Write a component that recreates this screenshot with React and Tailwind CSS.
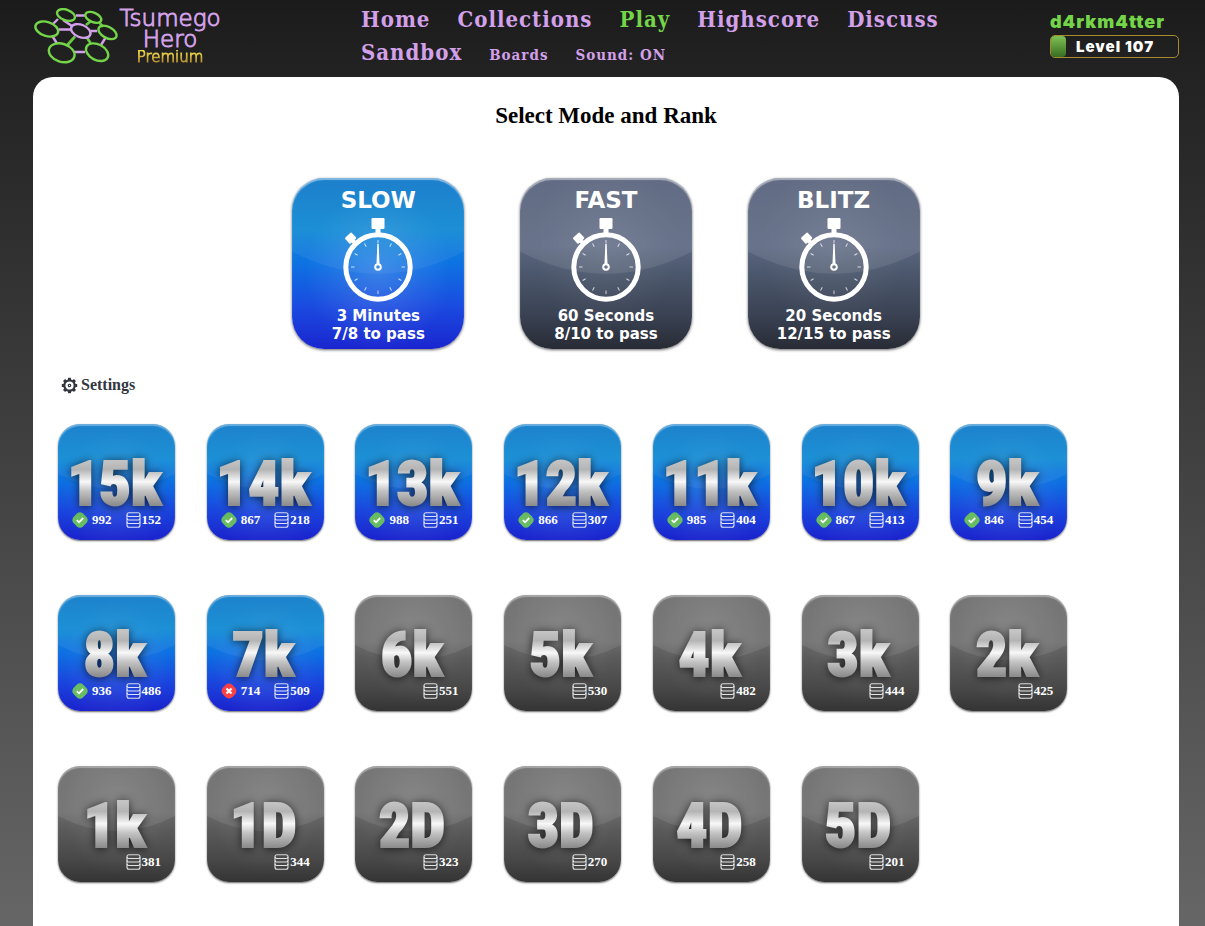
import React from "react";

const nav = [
  ["Home", false], ["Collections", false], ["Play", true], ["Highscore", false], ["Discuss", false], ["Sandbox", false],
];

const modes = [
  { name: "SLOW", time: "3 Minutes", pass: "7/8 to pass", active: true },
  { name: "FAST", time: "60 Seconds", pass: "8/10 to pass" },
  { name: "BLITZ", time: "20 Seconds", pass: "12/15 to pass" },
];

const ranks = [
  ["15k", 152, 992, "ok"], ["14k", 218, 867, "ok"], ["13k", 251, 988, "ok"], ["12k", 307, 866, "ok"],
  ["11k", 404, 985, "ok"], ["10k", 413, 867, "ok"], ["9k", 454, 846, "ok"], ["8k", 486, 936, "ok"],
  ["7k", 509, 714, "fail"], ["6k", 551], ["5k", 530], ["4k", 482], ["3k", 444], ["2k", 425],
  ["1k", 381], ["1D", 344], ["2D", 323], ["3D", 270], ["4D", 258], ["5D", 201],
];

function Logo() {
  return (
    <svg width="86" height="56" viewBox="33 8 86 56" fill="none" aria-hidden="true">
      <g stroke="#d3a0ea" strokeWidth="2.4">
        <path d="M53 24l5-5M76 15.500h9M59 29.500h12M91 31h6M52 35.500l5 8M74 52h11M101 45l5-8M63 20l9 6" />
      </g>
      <g stroke="#68c843" strokeWidth="2.8">
        <path d="M75 36.500l-8 9M86 25l5-4M86.500 37l4 6M99 22l4 5" />
      </g>
      <g stroke="#74d549" strokeWidth="2.400">
        <ellipse cx="46.800" cy="29" rx="11.800" ry="7" transform="rotate(18 46.800 29)" />
        <ellipse cx="66" cy="15" rx="9.300" ry="5.300" transform="rotate(20 66 15)" />
        <ellipse cx="93.300" cy="17.400" rx="8.500" ry="4.700" transform="rotate(24 93.300 17.400)" />
        <ellipse cx="107.500" cy="32.400" rx="9.800" ry="5.600" transform="rotate(28 107.500 32.400)" />
        <ellipse cx="61.700" cy="52.800" rx="13.200" ry="9" transform="rotate(18 61.700 52.800)" />
        <ellipse cx="97.100" cy="52.200" rx="11.900" ry="7.800" transform="rotate(28 97.100 52.200)" />
      </g>
      <ellipse cx="80.800" cy="31" rx="10.200" ry="6.200" transform="rotate(22 80.800 31)" stroke="#d3a0ea" strokeWidth="2.400" />
    </svg>
  );
}

function Stopwatch() {
  const ticks = [0, 30, 60, 90, 120, 150, 180, 210, 240, 270, 300, 330];
  return (
    <svg width="70" height="84" viewBox="0 0 70 84" className="block" aria-hidden="true">
      <rect x="28.500" y="0" width="13" height="11" rx="1.200" fill="#fff" />
      <rect x="32.500" y="10" width="5" height="6" fill="#fff" />
      <rect x="-4.500" y="-3.800" width="9" height="8" rx="1" fill="#fff" transform="translate(7.500 20) rotate(-42)" />
      <path d="M9 22l5 5" stroke="#fff" strokeWidth="4" />
      <circle cx="35" cy="49" r="32.200" fill="none" stroke="#fff" strokeWidth="5" />
      {ticks.map((t) => (
        <path key={t} d="M35 22v3.500" stroke="#fff" strokeOpacity=".75" strokeWidth="1" transform={`rotate(${t} 35 49)`} />
      ))}
      <path d="M34.300 26h1.400l.8 20h-3z" fill="#fff" />
      <circle cx="35" cy="49" r="2.800" fill="none" stroke="#fff" strokeWidth="2" />
    </svg>
  );
}

function Gloss({ strength }) {
  return (
    <svg viewBox="0 0 100 100" preserveAspectRatio="none" className="absolute inset-0 h-full w-full" aria-hidden="true">
      <path d="M0 0H100V43Q50 69 0 43Z" fill="#fff" fillOpacity={strength} />
    </svg>
  );
}

function StackIcon() {
  return (
    <svg width="15" height="16" viewBox="0 0 15 16" fill="none" stroke="#fff" strokeWidth="1.100" strokeOpacity=".85" aria-hidden="true">
      <rect x="1" y=".8" width="13" height="14.400" rx="2" />
      <path d="M1 3.200q.3 1.300 1.800 1.300h9.400q1.500 0 1.800-1.300M1 6.700q.3 1.300 1.800 1.300h9.400q1.500 0 1.800-1.300M1 10.200q.3 1.300 1.800 1.300h9.400q1.500 0 1.800-1.300" />
    </svg>
  );
}

function ResultIcon({ kind }) {
  return kind === "ok" ? (
    <svg width="16" height="16" viewBox="0 0 16 16" role="img" aria-label="Passed">
      <rect x="1.300" y="1.300" width="13.400" height="13.400" rx="4.300" fill="#68bd62" transform="rotate(45 8 8)" />
      <path d="M4.800 8.200l2.200 2.100L11.200 6" fill="none" stroke="#fff" strokeWidth="1.800" />
    </svg>
  ) : (
    <svg width="16" height="16" viewBox="0 0 16 16" role="img" aria-label="Failed">
      <rect x="1.300" y="1.300" width="13.400" height="13.400" rx="5" fill="#fb4143" transform="rotate(45 8 8)" />
      <path d="M5.500 5.500l5 5M10.500 5.500l-5 5" fill="none" stroke="#fff" strokeWidth="2.200" />
    </svg>
  );
}

function ModeCard({ mode }) {
  return (
    <button
      type="button"
      aria-pressed={!!mode.active}
      className={
        "relative h-[171px] w-[172px] overflow-hidden rounded-[32px] text-center font-['DejaVu_Sans',sans-serif] font-bold text-white shadow-[0_1px_3px_rgba(0,0,0,0.6),inset_0_2px_1px_rgba(255,255,255,0.45)] " +
        (mode.active
          ? "bg-[radial-gradient(ellipse_at_50%_55%,rgba(255,255,255,0.16),transparent_60%),linear-gradient(#0f78c8,#0e88d4_30%,#0d72e2_50%,#1a4be0_75%,#1a25cf)]"
          : "bg-[radial-gradient(ellipse_at_50%_40%,rgba(255,255,255,0.08),transparent_60%),linear-gradient(#525d77,#5a6680_40%,#4c586d_55%,#3a4253_80%,#282b35)]")
      }
    >
      <Gloss strength={mode.active ? 0.06 : 0.09} />
      <span className="relative flex h-full flex-col items-center pt-2">
        <span className="text-[23px] leading-7">{mode.name}</span>
        <span className="mt-1"><Stopwatch /></span>
        <span className="mt-[5px] text-[15px] leading-[18px]">{mode.time}<br />{mode.pass}</span>
      </span>
    </button>
  );
}

function RankTile({ rank: [name, count, score, result] }) {
  return (
    <button
      type="button"
      className={
        "relative block h-[116px] w-[117px] overflow-hidden rounded-[22px] font-['Liberation_Serif',serif] text-[13px] font-bold text-white shadow-[0_1px_2px_rgba(0,0,0,0.6),inset_0_2px_1px_rgba(255,255,255,0.35)] " +
        (result
          ? "bg-[radial-gradient(ellipse_at_50%_60%,rgba(255,255,255,0.10),transparent_65%),linear-gradient(#0f7bc9,#0e89d4_30%,#0d70e2_50%,#1a45de_75%,#1a22cc)]"
          : "bg-[radial-gradient(ellipse_at_50%_35%,rgba(255,255,255,0.12),transparent_65%),linear-gradient(#686868,#6a6a6a_40%,#5a5a5a_55%,#484848_80%,#343434)]")
      }
    >
      <Gloss strength={result ? 0.06 : 0.09} />
      <span className="relative flex h-full flex-col">
        <span className="mt-8 bg-[linear-gradient(#c4c4c4_8%,#b4b4b4_24%,#f8f8f8_46%,#c4c4c4_62%,#8c8c8c_88%)] bg-clip-text pr-1 text-center font-['Roboto_Condensed','Liberation_Sans',sans-serif] text-[62px] leading-[56px] font-black text-transparent drop-shadow-[0_1px_5px_rgba(0,0,0,0.7)] [-webkit-text-stroke:2px_transparent]">
          {name}
        </span>
        <span className="flex h-4 items-center justify-end pr-3.5">
          {result && (
            <span className="mr-auto ml-3.5 flex items-center gap-1">
              <ResultIcon kind={result} />
              {score}
            </span>
          )}
          <span className="flex items-center gap-px"><StackIcon />{count}</span>
        </span>
      </span>
    </button>
  );
}

export default function App() {
  return (
    <div className="min-h-screen bg-[linear-gradient(#1b1b1b,#232323_80px,#666_926px)] pr-[26px] pl-[33px]">
      <header className="flex h-[77px] items-start">
        <a href="#" className="flex w-[328px] shrink-0 pt-2 font-['DejaVu_Sans',sans-serif] font-extralight">
          <Logo />
          <span className="flex w-[102px] flex-col items-center text-[23px] leading-[21px] text-[#d3a0ea] [-webkit-text-stroke:1px_#d3a0ea]">
            <span>Tsumego</span>
            <span>Hero</span>
            <span className="bg-linear-to-b from-[#f3df4e] to-[#a87f2c] bg-clip-text text-[15px] leading-[15px] text-transparent [-webkit-text-stroke:1px_transparent]">Premium</span>
          </span>
        </a>
        <nav className="flex max-w-[620px] flex-1 flex-wrap items-baseline gap-x-[27px] pt-[3px] font-['DejaVu_Serif_Condensed','DejaVu_Serif',serif] text-[22px] leading-[33px] font-bold tracking-[1px]">
          {nav.map(([t, on]) => (
            <a key={t} href="#" className={on ? "text-[#74d549]" : "text-[#d3a0ea]"}>{t}</a>
          ))}
          <a href="#" className="text-[15px] text-[#d3a0ea]">Boards</a>
          <a href="#" className="text-[15px] text-[#d3a0ea]">Sound: ON</a>
        </nav>
        <div className="ml-auto w-[129px] pt-3 font-['Inter',sans-serif] font-black tracking-[1px]">
          <a href="#" className="block text-[18px] leading-5 text-[#74d549]">d4rkm4tter</a>
          <div className="mt-[3px] flex h-[23px] items-center rounded-[5px] border border-[#a8892c]">
            <span className="h-full w-[15px] shrink-0 rounded bg-linear-to-b from-[#7fc254] to-[#386e22]" />
            <span className="ml-2.5 pt-0.5 text-[15px] text-white">Level 107</span>
          </div>
        </div>
      </header>
      <main className="min-h-[849px] rounded-t-[20px] bg-white pt-6 pb-10 font-['Liberation_Serif',serif]">
        <h1 className="text-center text-[23px] leading-[30px] font-bold text-black">Select Mode and Rank</h1>
        <div className="mx-auto mt-[47px] grid max-w-[683px] grid-cols-3 justify-items-center">
          {modes.map((m) => <ModeCard key={m.name} mode={m} />)}
        </div>
        <button type="button" className="mt-[26px] ml-7 flex items-center gap-[3px] text-[16px] leading-5 font-bold text-[#32363f]">
          <svg width="17" height="17" viewBox="0 0 17 17" fill="none" stroke="#32363f" aria-hidden="true">
            <circle cx="8.500" cy="8.500" r="5.200" strokeWidth="2.200" />
            <circle cx="8.500" cy="8.500" r="1.200" strokeWidth="1.200" />
            {[0, 45, 90, 135, 180, 225, 270, 315].map((a) => (
              <path key={a} d="M8.500 3V.8" strokeWidth="3" transform={`rotate(${a} 8.500 8.500)`} />
            ))}
          </svg>
          Settings
        </button>
        <div className="mt-[29px] grid grid-cols-7 gap-y-[55px] pr-20 pl-[25px]">
          {ranks.map((r) => <RankTile key={r[0]} rank={r} />)}
        </div>
      </main>
    </div>
  );
}
